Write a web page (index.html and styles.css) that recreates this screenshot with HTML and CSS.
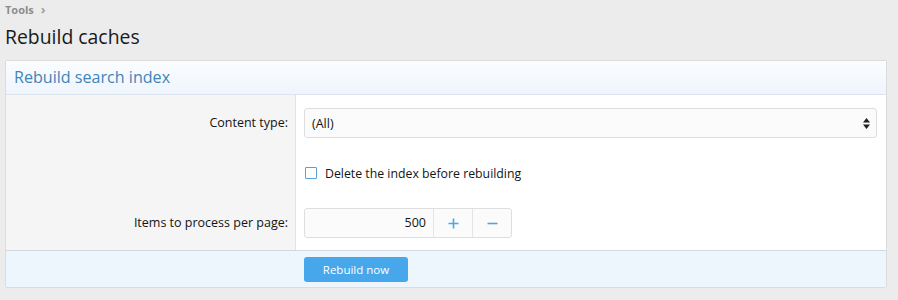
FILE: index.html
```html
<!DOCTYPE html>
<html>
<head>
<meta charset="utf-8">
<link rel="stylesheet" href="styles.css">
</head>
<body>
<div class="crumbs"><span>Tools</span><span class="sep">&rsaquo;</span></div>
<h1 class="title">Rebuild caches</h1>
<div class="block">
  <h2 class="block-header">Rebuild search index</h2>
  <div class="block-body">
    <div class="row">
      <div class="label">Content type:</div>
      <div class="field">
        <div class="select"><span>(All)</span>
          <svg class="arrows" width="7" height="11" viewBox="0 0 7 11"><path d="M3.5 0L7 4.5H0z M3.5 11L7 6.5H0z" fill="#222"/></svg>
        </div>
      </div>
    </div>
    <div class="row">
      <div class="label"></div>
      <div class="field">
        <label class="check"><span class="box"></span><span>Delete the index before rebuilding</span></label>
      </div>
    </div>
    <div class="row">
      <div class="label">Items to process per page:</div>
      <div class="field">
        <div class="spinbox">
          <div class="num">500</div>
          <div class="btn">
            <svg width="11" height="11" viewBox="0 0 11 11"><path d="M5.5 0.5v10M0.5 5.5h10" stroke="#47a7eb" stroke-width="1.6"/></svg>
          </div>
          <div class="btn">
            <svg width="11" height="11" viewBox="0 0 11 11"><path d="M0.5 5.5h10" stroke="#47a7eb" stroke-width="1.6"/></svg>
          </div>
        </div>
      </div>
    </div>
  </div>
  <div class="block-footer">
    <button class="submit">Rebuild now</button>
  </div>
</div>
</body>
</html>
```
FILE: styles.css
```css
html, body {
  margin: 0;
  padding: 0;
  background: #ececec;
  font-family: "Open Sans", "Noto Sans", sans-serif;
  color: #141414;
}
body {
  padding: 0 11px 0 5px;
}
.crumbs {
  height: 18px;
  font-size: 11px;
  font-weight: bold;
  color: #8c8c8c;
  line-height: 18px;
}
.crumbs .sep {
  margin-left: 7px;
  font-size: 13px;
  color: #a0a0a0;
}
.title {
  margin: 0;
  font-size: 19.4px;
  font-weight: 400;
  line-height: 38px;
  height: 42px;
  color: #1a1a1a;
}
.block {
  border: 1px solid #dcdcdc;
  border-radius: 2px;
  background: #fff;
}
.block-header {
  margin: 0;
  height: 33px;
  line-height: 33px;
  padding-left: 8px;
  font-size: 16.1px;
  font-weight: 400;
  color: #3f85b8;
  background: linear-gradient(#fbfdff, #eef5fc);
  border-bottom: 1px solid #dde3ea;
}
.block-body {
  padding: 3px 0 2px;
  background: linear-gradient(to right, #f5f5f5 0, #f5f5f5 289px, #e2e2e2 289px, #e2e2e2 290px, #fff 290px);
}
.row {
  display: grid;
  grid-template-columns: 290px 1fr;
  padding: 10px 0;
  height: 30px;
}
.label {
  text-align: right;
  padding-right: 8px;
  font-size: 12.5px;
  line-height: 30px;
  color: #141414;
}
.field {
  padding-left: 8px;
  padding-right: 9px;
}
.select {
  height: 28px;
  border: 1px solid #dedede;
  border-radius: 3px;
  background: #fbfbfb;
  display: flex;
  align-items: center;
  justify-content: space-between;
  padding: 0 6px 0 7px;
  font-size: 12.5px;
}
.check {
  display: flex;
  align-items: center;
  height: 30px;
  font-size: 12.3px;
  padding-left: 1px;
}
.box {
  width: 10px;
  height: 10px;
  border: 1.5px solid #5a9fd6;
  border-radius: 1px;
  margin-right: 8px;
  background: #fff;
}
.spinbox {
  display: inline-flex;
  height: 28px;
  border: 1px solid #dedede;
  border-radius: 3px;
  background: #fbfbfb;
}
.num {
  width: 121px;
  text-align: right;
  padding-right: 7px;
  font-size: 12.5px;
  line-height: 28px;
}
.btn {
  width: 38px;
  border-left: 1px solid #e4e4e4;
  display: flex;
  align-items: center;
  justify-content: center;
}
.block-footer {
  height: 36px;
  border-top: 1px solid #d4d8dd;
  background: #edf5fd;
  padding-left: 298px;
  display: flex;
  align-items: center;
}
.submit {
  width: 104px;
  height: 25px;
  border: none;
  border-radius: 3px;
  background: #47a7eb;
  color: #fff;
  font-family: inherit;
  font-size: 11.5px;
}
```
